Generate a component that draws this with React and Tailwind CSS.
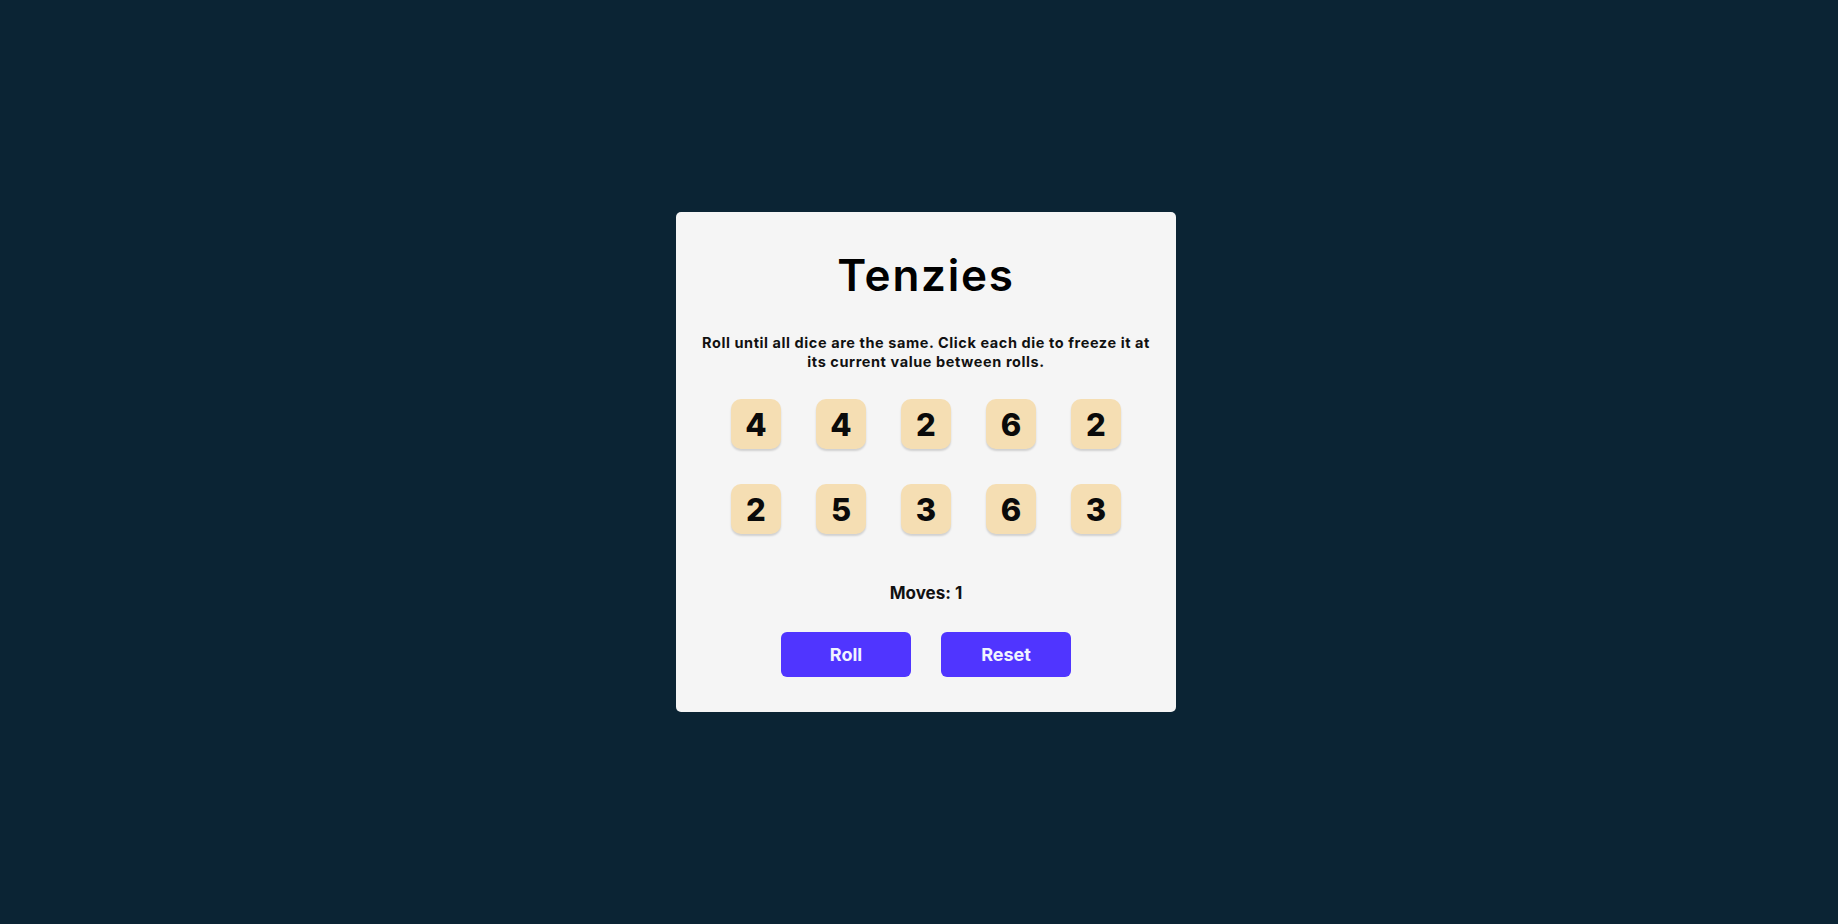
import React, { useState } from 'react';

function Die({ value }) {
  return (
    <button className="w-[50px] h-[50px] rounded-[10px] bg-[#F5DEB3] shadow-[0_2px_2px_rgba(0,0,0,0.15)] flex items-center justify-center text-[31px] font-extrabold text-[#0a0a0a] leading-none">
      {value}
    </button>
  );
}

export default function App() {
  const [dice] = useState([4, 4, 2, 6, 2, 2, 5, 3, 6, 3]);
  const [moves] = useState(1);

  return (
    <div className="min-h-screen w-full bg-[#0B2434] flex items-center justify-center pl-[14px] font-['Inter',sans-serif]">
      <main className="w-[500px] h-[500px] bg-[#F5F5F5] rounded-[5px] flex flex-col items-center pt-[38px]">
        <h1 className="text-[44px] leading-[50px] font-semibold text-black tracking-[0.04em]">Tenzies</h1>
        <p className="mt-[33px] px-[24px] text-center text-[14.5px] leading-[19px] font-bold text-[#111] tracking-[0.04em]">
          Roll until all dice are the same. Click each die to freeze it at its current value between rolls.
        </p>
        <div className="mt-[28px] grid grid-cols-5 gap-[35px]">
          {dice.map((d, i) => <Die key={i} value={d} />)}
        </div>
        <p className="mt-[47px] text-[17px] leading-[24px] font-bold text-[#111]">Moves: {moves}</p>
        <div className="mt-[27px] flex gap-[30px]">
          <button className="w-[130px] h-[45px] rounded-[6px] bg-[#5035FF] text-[#f0f4ff] text-[18px] font-bold">Roll</button>
          <button className="w-[130px] h-[45px] rounded-[6px] bg-[#5035FF] text-[#f0f4ff] text-[18px] font-bold">Reset</button>
        </div>
      </main>
    </div>
  );
}
